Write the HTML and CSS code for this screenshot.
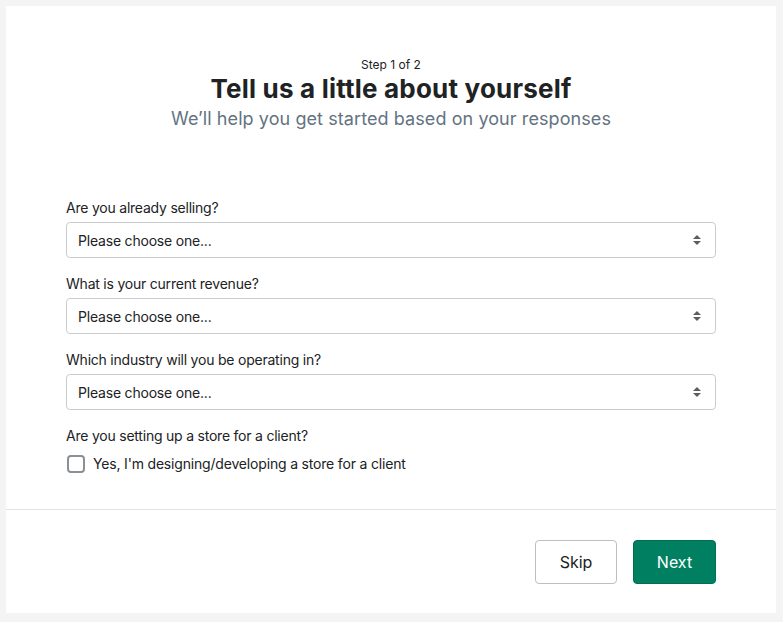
FILE: index.html
```html
<!DOCTYPE html>
<html lang="en">
<head>
<meta charset="utf-8">
<title>Tell us a little about yourself</title>
<link rel="stylesheet" href="styles.css">
</head>
<body>
<div class="card">
  <header class="head">
    <div class="step">Step 1 of 2</div>
    <h1 class="title">Tell us a little about yourself</h1>
    <p class="subtitle">We’ll help you get started based on your responses</p>
  </header>
  <form class="form">
    <div class="field">
      <label class="label">Are you already selling?</label>
      <div class="select"><span>Please choose one...</span><svg class="arrows" width="10" height="12" viewBox="0 0 10 12"><path d="M5 1 L9 5 H1 Z M5 11 L1 7 H9 Z" fill="#5c5f62"/></svg></div>
    </div>
    <div class="field">
      <label class="label">What is your current revenue?</label>
      <div class="select"><span>Please choose one...</span><svg class="arrows" width="10" height="12" viewBox="0 0 10 12"><path d="M5 1 L9 5 H1 Z M5 11 L1 7 H9 Z" fill="#5c5f62"/></svg></div>
    </div>
    <div class="field">
      <label class="label">Which industry will you be operating in?</label>
      <div class="select"><span>Please choose one...</span><svg class="arrows" width="10" height="12" viewBox="0 0 10 12"><path d="M5 1 L9 5 H1 Z M5 11 L1 7 H9 Z" fill="#5c5f62"/></svg></div>
    </div>
    <div class="field">
      <div class="label">Are you setting up a store for a client?</div>
      <label class="check"><span class="box"></span><span>Yes, I'm designing/developing a store for a client</span></label>
    </div>
  </form>
  <footer class="foot">
    <button class="btn" type="button">Skip</button>
    <button class="btn primary" type="button">Next</button>
  </footer>
</div>
</body>
</html>
```
FILE: styles.css
```css
* { box-sizing: border-box; }
html, body { margin: 0; }
body {
  background: #f4f4f4;
  padding: 6px 7px 9px 6px;
  font-family: Inter, "Liberation Sans", Arial, sans-serif;
  color: #202223;
}
.card {
  background: #fff;
  height: 607px;
  display: flex;
  flex-direction: column;
}
.head {
  padding-top: 51px;
  text-align: center;
}
.step {
  font-size: 12px;
  line-height: 16px;
}
.title {
  margin: 0;
  font-size: 26px;
  line-height: 32px;
  font-weight: 700;
  letter-spacing: 0.2px;
}
.subtitle {
  margin: 2px 0 0;
  font-size: 18px;
  line-height: 24px;
  letter-spacing: 0.08px;
  color: #637381;
}
.form {
  padding: 67px 60px 35px;
  display: flex;
  flex-direction: column;
  gap: 16px;
  border-bottom: 1px solid #e1e3e5;
}
.field { display: flex; flex-direction: column; }
.label {
  font-size: 14px;
  line-height: 20px;
  letter-spacing: -0.22px;
  margin-bottom: 4px;
}
.select {
  height: 36px;
  border: 1px solid #c9cccf;
  border-radius: 4px;
  padding: 0 13px 0 11px;
  display: flex;
  align-items: center;
  justify-content: space-between;
  font-size: 14px;
  letter-spacing: -0.2px;
}
.check {
  margin-top: 4px;
  display: flex;
  align-items: center;
  gap: 8px;
  font-size: 14px;
  line-height: 20px;
  letter-spacing: -0.18px;
}
.box {
  width: 18px;
  height: 18px;
  margin-left: 1px;
  border: 2px solid #8c9196;
  border-radius: 4px;
}
.foot {
  flex: 1;
  display: flex;
  justify-content: flex-end;
  align-items: flex-start;
  gap: 16px;
  padding: 30px 60px 0;
}
.btn {
  font-family: inherit;
  font-size: 16px;
  height: 44px;
  min-width: 82px;
  padding: 0 22px;
  border: 1px solid #babfc3;
  border-radius: 4px;
  background: #fff;
  color: #202223;
}
.btn.primary {
  background: #008060;
  border-color: #006e52;
  color: #fff;
  min-width: 83px;
}
```
